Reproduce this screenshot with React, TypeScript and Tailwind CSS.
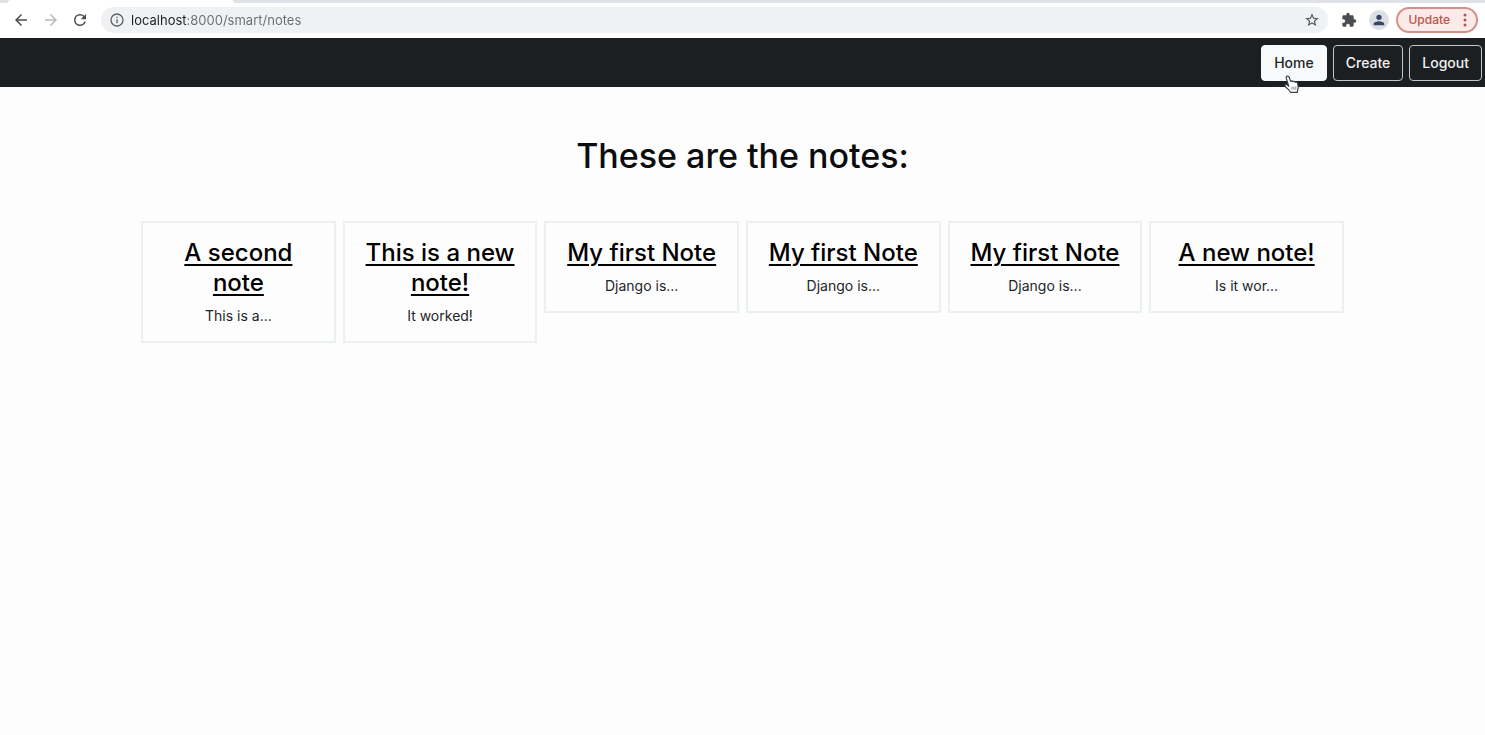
import type { ReactNode } from "react";

type Note = { id: number; title: string; excerpt: string };

const notes: Note[] = [
  { id: 1, title: "A second note", excerpt: "This is a..." },
  { id: 2, title: "This is a new note!", excerpt: "It worked!" },
  { id: 3, title: "My first Note", excerpt: "Django is..." },
  { id: 4, title: "My first Note", excerpt: "Django is..." },
  { id: 5, title: "My first Note", excerpt: "Django is..." },
  { id: 6, title: "A new note!", excerpt: "Is it wor..." },
];

function MaterialIcon({ d, className }: { d: string; className: string }) {
  return (
    <svg viewBox="0 0 24 24" fill="currentColor" aria-hidden="true" className={className}>
      <path d={d} />
    </svg>
  );
}

function ToolButton({ label, className, children }: { label: string; className: string; children: ReactNode }) {
  return (
    <button type="button" aria-label={label} className={`flex shrink-0 items-center justify-center ${className}`}>
      {children}
    </button>
  );
}

function BrowserBar() {
  return (
    <div className="bg-white">
      <div className="flex h-[3px] bg-[#dee1e6]">
        <div className="w-2" />
        <div className="w-[226px] rounded-t-sm bg-white" />
      </div>
      <div className="flex h-[35px] items-center pr-[7px] pb-px pl-[11px]">
        <ToolButton label="Back" className="size-5 text-[#4a4d51]">
          <MaterialIcon className="size-[18px]" d="M20 11H7.83l5.59-5.59L12 4l-8 8 8 8 1.41-1.41L7.83 13H20v-2z" />
        </ToolButton>
        <ToolButton label="Forward" className="ml-2.5 size-5 text-[#b7b9bc]">
          <MaterialIcon className="size-[18px]" d="M12 4l-1.41 1.41L16.17 11H4v2h12.17l-5.58 5.59L12 20l8-8z" />
        </ToolButton>
        <ToolButton label="Reload" className="ml-[9px] size-5 text-[#4a4d51]">
          <MaterialIcon
            className="size-[18px]"
            d="M17.65 6.35A7.96 7.96 0 0 0 12 4a8 8 0 1 0 7.73 10h-2.08A6 6 0 1 1 12 6c1.66 0 3.14.69 4.22 1.78L13 11h7V4l-2.35 2.35z"
          />
        </ToolButton>
        <div className="ml-[11px] flex h-[26px] flex-1 items-center rounded-full bg-[#f0f1f3] pr-1.5 pl-2">
          <ToolButton label="Site information" className="size-4 text-[#5f6368]">
            <MaterialIcon
              className="size-4"
              d="M11 7h2v2h-2zm0 4h2v6h-2zm1-9a10 10 0 1 0 0 20 10 10 0 0 0 0-20zm0 18a8 8 0 1 1 0-16 8 8 0 0 1 0 16z"
            />
          </ToolButton>
          <input
            type="text"
            aria-label="Address"
            defaultValue="localhost:8000/smart/notes"
            className="ml-1.5 h-5 min-w-0 flex-1 bg-[linear-gradient(to_right,#1d1f22_56px,#696c70_56px)] bg-clip-text text-[13px] text-transparent caret-black outline-none"
          />
          <ToolButton label="Bookmark this page" className="size-5 text-[#4a4d51]">
            <MaterialIcon
              className="size-4"
              d="M22 9.24l-7.19-.62L12 2 9.19 8.63 2 9.24l5.46 4.73L5.82 21 12 17.27 18.18 21l-1.63-7.03L22 9.24zM12 15.4l-3.76 2.27 1-4.28-3.32-2.88 4.38-.38L12 6.1l1.71 4.04 4.38.38-3.32 2.88 1 4.28L12 15.4z"
            />
          </ToolButton>
        </div>
        <ToolButton label="Extensions" className="ml-[11px] size-5 text-[#4a4d51]">
          <MaterialIcon
            className="size-4"
            d="M20.5 11H19V7c0-1.1-.9-2-2-2h-4V3.500a2.500 2.500 0 0 0-5 0V5H4c-1.100 0-1.990.9-1.990 2v3.800H3.500c1.490 0 2.700 1.210 2.700 2.700s-1.210 2.700-2.700 2.700H2V20c0 1.100.9 2 2 2h3.800v-1.500c0-1.490 1.210-2.700 2.700-2.700s2.700 1.210 2.700 2.700V22H17c1.100 0 2-.9 2-2v-4h1.500a2.500 2.500 0 0 0 0-5z"
          />
        </ToolButton>
        <ToolButton label="Profile" className="ml-2.5 size-5 rounded-full bg-[#dcdfe6] text-[#38455f]">
          <MaterialIcon
            className="size-4"
            d="M12 12a4 4 0 1 0 0-8 4 4 0 0 0 0 8zm0 2c-2.670 0-8 1.340-8 4v2h16v-2c0-2.660-5.330-4-8-4z"
          />
        </ToolButton>
        <button
          type="button"
          className="ml-[7px] flex h-[26px] shrink-0 items-center gap-[13px] rounded-full border-2 border-[#d4918b] bg-[#fbeae8] pr-[9px] pl-2.5 text-[12px] font-medium text-[#b9524a]"
        >
          Update
          <svg viewBox="0 0 4 14" fill="currentColor" aria-hidden="true" className="h-3.5 w-1">
            <circle cx="2" cy="2" r="1.500" />
            <circle cx="2" cy="7" r="1.500" />
            <circle cx="2" cy="12" r="1.500" />
          </svg>
        </button>
      </div>
    </div>
  );
}

function HandCursor() {
  return (
    <svg
      viewBox="0 0 16 18"
      aria-hidden="true"
      className="pointer-events-none absolute top-[29px] left-[21px] h-[19px] w-[17px]"
    >
      <path
        d="M4.900 9 3 3C2.500 1 5.100.2 5.800 2.100L7.100 6C7.900 5.300 8.900 5.600 9.300 6.300 10.100 5.700 11.200 6 11.600 6.900 12.600 6.400 13.600 7 13.800 8L14.300 11C14.600 12.800 13.700 13.900 13.400 16.500H7.200C6.300 14.500 4 13 2.200 11 1 9.400 2.600 8.300 3.900 9.400L5.400 10.700Z"
        fill="#fff"
        stroke="#3c3e40"
        strokeWidth="1.100"
        strokeLinejoin="round"
      />
      <path d="M8.500 11v3M10.300 11v3M12.100 11v3" stroke="#66686a" strokeWidth=".7" />
    </svg>
  );
}

function NavBar() {
  return (
    <nav
      aria-label="Main"
      className="flex h-[49px] items-center justify-end gap-1.5 bg-[#1b1f22] pr-[3px] text-[14px] font-medium text-[#f1f2f3]"
    >
      <a
        href="#home"
        aria-current="page"
        className="relative flex h-9 items-center rounded border border-[#f8f9fa] bg-[#f8f9fa] px-3 text-[#212529]"
      >
        Home
        <HandCursor />
      </a>
      <a href="#create" className="flex h-9 items-center rounded border border-[#c4c6c8] px-3">
        Create
      </a>
      <a href="#logout" className="flex h-9 items-center rounded border border-[#c4c6c8] px-3">
        Logout
      </a>
    </nav>
  );
}

function NoteCard({ note }: { note: Note }) {
  return (
    <article className="border-2 border-[#ebf1f2] px-4 py-[15px]">
      <h2 className="text-[24px] leading-[30px] font-medium text-black">
        <a href={`#note-${note.id}`} className="underline decoration-2 underline-offset-3">
          {note.title}
        </a>
      </h2>
      <p className="mt-2 text-[14px] leading-5 text-[#222528]">{note.excerpt}</p>
    </article>
  );
}

export default function App() {
  return (
    <div className="min-h-screen bg-[#fefdfe] font-['Inter',sans-serif]">
      <BrowserBar />
      <NavBar />
      <main className="mx-auto w-[81%] pt-[47px] text-center">
        <h1 className="text-[34px] leading-[44px] font-medium text-[#0b0c0d]">These are the notes:</h1>
        <div className="mt-[43px] grid grid-cols-6 items-start gap-[7px]">
          {notes.map((note) => (
            <NoteCard key={note.id} note={note} />
          ))}
        </div>
      </main>
    </div>
  );
}
